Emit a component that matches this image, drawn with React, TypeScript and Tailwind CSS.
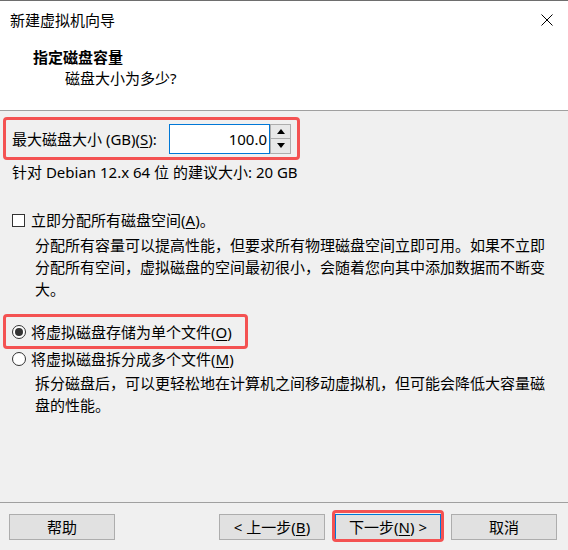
import React from "react";

const RED = "border-[#f45252]";

function Mn({ k }: { k: string }) {
  return (
    <>
      (<span className="underline underline-offset-2">{k}</span>)
    </>
  );
}

function Radio({ checked }: { checked?: boolean }) {
  return (
    <span className="w-[14px] h-[14px] rounded-full border border-[#333] bg-white flex items-center justify-center shrink-0">
      {checked && <span className="w-[8px] h-[8px] rounded-full bg-[#333]" />}
    </span>
  );
}

function Btn({ children, focus }: { children: React.ReactNode; focus?: boolean }) {
  return (
    <button
      className={`w-[106px] h-[26px] bg-[#e1e1e1] border text-[15px] leading-[20px] text-black flex items-center justify-center ${
        focus ? "border-[#0078d7]" : "border-[#adadad]"
      }`}
    >
      {children}
    </button>
  );
}

export default function App() {
  return (
    <div className="w-[568px] h-[550px] bg-[#f0f0f0] flex flex-col text-[15px] text-black font-['Noto_Sans','Noto_Sans_CJK_SC',sans-serif] overflow-hidden">
      {/* header */}
      <div className="h-[111px] bg-white border-t border-[#6e6e6e] border-b border-b-[#a0a0a0] shrink-0">
        <div className="h-[38px] flex items-center justify-between pl-[10px] pr-[15px]">
          <span className="leading-[20px]">新建虚拟机向导</span>
          <svg width="12" height="12" viewBox="0 0 12 12">
            <path d="M0.5 0.5 L11.5 11.5 M11.5 0.5 L0.5 11.5" stroke="#000" strokeWidth="1" />
          </svg>
        </div>
        <div className="pl-[33px] mt-[8px] leading-[20px] font-bold">指定磁盘容量</div>
        <div className="pl-[65px] mt-[1px] leading-[20px]">磁盘大小为多少?</div>
      </div>

      {/* body */}
      <div className="flex flex-col">
        <div className={`ml-[3px] mt-[6px] w-[297px] h-[43px] border-[3px] ${RED} rounded-[4px] flex items-center pl-[6px]`}>
          <span className="leading-[20px] w-[157px]">
            最大磁盘大小 (GB)<Mn k="S" />:
          </span>
          <div className="flex h-[30px]">
            <div className="w-[101px] h-[30px] bg-white border border-[#0078d7] flex items-center justify-end pr-[2px] leading-[20px]">
              100.0
            </div>
            <div className="w-[21px] h-[30px] flex flex-col border border-[#adadad] bg-[#e8e8e8]">
              <div className="flex-1 flex items-center justify-center border-b border-[#adadad]">
                <svg width="8" height="5" viewBox="0 0 8 5"><path d="M4 0 L8 5 L0 5 Z" fill="#000" /></svg>
              </div>
              <div className="flex-1 flex items-center justify-center">
                <svg width="8" height="5" viewBox="0 0 8 5"><path d="M0 0 L8 0 L4 5 Z" fill="#000" /></svg>
              </div>
            </div>
          </div>
        </div>

        <div className="pl-[12px] mt-[2px] leading-[20px]">针对 Debian 12.x 64 位 的建议大小: 20 GB</div>

        <div className="pl-[12px] mt-[28px] h-[20px] flex items-center gap-[6px]">
          <span className="w-[13px] h-[13px] border border-[#333] bg-white shrink-0" />
          <span className="leading-[20px]">
            立即分配所有磁盘空间<Mn k="A" />。
          </span>
        </div>
        <div className="pl-[35px] mt-[4px] leading-[22px]">
          <div>分配所有容量可以提高性能，但要求所有物理磁盘空间立即可用。如果不立即</div>
          <div>分配所有空间，虚拟磁盘的空间最初很小，会随着您向其中添加数据而不断变</div>
          <div>大。</div>
        </div>

        <div className={`ml-[3px] mt-[14px] w-[245px] h-[35px] border-[3px] ${RED} rounded-[4px] flex items-center gap-[5px] pl-[6px]`}>
          <Radio checked />
          <span className="leading-[20px]">
            将虚拟磁盘存储为单个文件<Mn k="O" />
          </span>
        </div>
        <div className="pl-[12px] h-[20px] flex items-center gap-[5px]">
          <Radio />
          <span className="leading-[20px]">
            将虚拟磁盘拆分成多个文件<Mn k="M" />
          </span>
        </div>
        <div className="pl-[35px] mt-[3px] leading-[22px]">
          <div>拆分磁盘后，可以更轻松地在计算机之间移动虚拟机，但可能会降低大容量磁</div>
          <div>盘的性能。</div>
        </div>
      </div>

      {/* footer */}
      <div className="mt-auto h-[48px] border-t border-[#a0a0a0] pt-[11px] pl-[9px] pr-[11px] flex items-start shrink-0">
        <Btn>帮助</Btn>
        <div className="flex-1" />
        <div className="flex gap-[10px]">
          <Btn>
            &lt; 上一步<Mn k="B" />
          </Btn>
          <div className="relative">
            <Btn focus>
              下一步<Mn k="N" /> &gt;
            </Btn>
            <span className={`absolute -left-[3px] -right-[3px] -top-[4px] -bottom-[2px] border-[3px] ${RED} rounded-[4px] pointer-events-none`} />
          </div>
          <Btn>取消</Btn>
        </div>
      </div>
    </div>
  );
}
